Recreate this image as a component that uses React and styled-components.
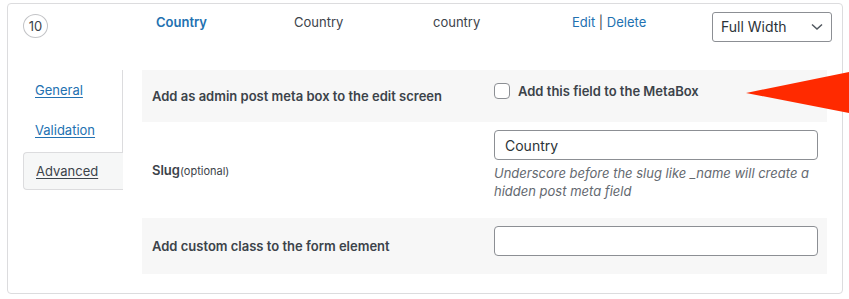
import styled, { createGlobalStyle } from "styled-components";

const GlobalStyle = createGlobalStyle`
  html, body {
    margin: 0;
    padding: 0;
    background: #fff;
  }
  body {
    font-family: Inter, "Noto Sans", "Liberation Sans", sans-serif;
    color: #3c434a;
  }
`;

const Page = styled.div`
  position: relative;
  width: 849px;
  height: 299px;
  overflow: hidden;
  padding: 3px 0 0 7px;
  box-sizing: border-box;
`;

const Box = styled.div`
  width: 836px;
  height: 291px;
  box-sizing: border-box;
  border: 1px solid #dcdcde;
  border-radius: 4px;
`;

const Header = styled.div`
  display: grid;
  grid-template-columns: 133px 138px 139px 139px 140px auto;
  height: 66px;
  box-sizing: border-box;
  padding: 8px 0 0 15px;
  font-size: 13px;
  line-height: 18px;
`;

const Order = styled.div`
  width: 25px;
  height: 24px;
  margin-top: 2px;
  box-sizing: border-box;
  border: 1px solid #c3c4c7;
  border-radius: 50%;
  display: flex;
  align-items: center;
  justify-content: center;
  font-size: 13px;
  color: #3c434a;
`;

const Cell = styled.div`
  color: ${(p) => (p.$link ? "#2271b1" : "#3c434a")};
  font-weight: ${(p) => (p.$bold ? 600 : 400)};
  padding-top: 1px;
`;

const Link = styled.a`
  color: #2271b1;
  text-decoration: none;
`;

const Select = styled.div`
  width: 120px;
  height: 30px;
  box-sizing: border-box;
  border: 1px solid #8c8f94;
  border-radius: 3px;
  display: flex;
  align-items: center;
  justify-content: space-between;
  padding: 0 8px 0 8px;
  font-size: 14px;
  color: #2c3338;
`;

const Body = styled.div`
  display: flex;
  padding: 0 15px 0 15px;
`;

const Tabs = styled.div`
  width: 100px;
  height: 120px;
  box-sizing: border-box;
  border-right: 1px solid #dcdcde;
  display: flex;
  flex-direction: column;
  flex-shrink: 0;
`;

const Tab = styled.a`
  height: ${(p) => (p.$active ? "38px" : "40px")};
  margin-top: ${(p) => (p.$active ? "2px" : "0")};
  box-sizing: border-box;
  display: flex;
  align-items: center;
  padding-left: 12px;
  font-size: 13px;
  color: ${(p) => (p.$active ? "#3c434a" : "#2271b1")};
  text-decoration: underline;
  text-underline-offset: 2px;
  ${(p) =>
    p.$active &&
    `
    border: 1px solid #dcdcde;
    border-right: none;
    border-radius: 4px 0 0 4px;
    background: #f6f7f7;
    margin-right: -1px;
  `}
`;

const Panel = styled.div`
  margin-left: 19px;
  flex: 1;
  display: flex;
  flex-direction: column;
`;

const Row = styled.div`
  display: grid;
  grid-template-columns: 352px 1fr;
  background: ${(p) => (p.$shaded ? "#f7f7f7" : "#fff")};
`;

const Label = styled.div`
  align-self: center;
  padding-left: 10px;
  font-size: 13px;
  font-weight: 600;
  color: #3c434a;
`;

const Small = styled.span`
  font-size: 11px;
  font-weight: 400;
`;

const Field = styled.div`
  padding: 8px 9px 18px 0;
`;

const CheckLine = styled.label`
  display: flex;
  align-items: center;
  gap: 8px;
  height: 26px;
  font-size: 13px;
  font-weight: 600;
  color: #3c434a;
`;

const Check = styled.span`
  width: 16px;
  height: 16px;
  box-sizing: border-box;
  border: 1px solid #8c8f94;
  border-radius: 4px;
  background: #fff;
`;

const Input = styled.div`
  height: 30px;
  box-sizing: border-box;
  border: 1px solid #8c8f94;
  border-radius: 4px;
  background: #fff;
  display: flex;
  align-items: center;
  padding: 0 10px;
  font-size: 14px;
  color: #2c3338;
`;

const Desc = styled.p`
  margin: 4px 0 0;
  max-width: 324px;
  font-size: 13px;
  line-height: 18px;
  font-style: italic;
  color: #646970;
`;

const Arrow = styled.svg`
  position: absolute;
  left: 746px;
  top: 60px;
`;

export default function App() {
  return (
    <Page>
      <GlobalStyle />
      <Box>
        <Header>
          <Order>10</Order>
          <Cell $link $bold>Country</Cell>
          <Cell>Country</Cell>
          <Cell>country</Cell>
          <Cell>
            <Link href="#">Edit</Link> | <Link href="#">Delete</Link>
          </Cell>
          <Select>
            Full Width
            <svg width="12" height="8" viewBox="0 0 12 8">
              <path d="M1 1.5 L6 6 L11 1.5" fill="none" stroke="#50575e" strokeWidth="1.5" />
            </svg>
          </Select>
        </Header>
        <Body>
          <Tabs>
            <Tab href="#">General</Tab>
            <Tab href="#">Validation</Tab>
            <Tab $active>Advanced</Tab>
          </Tabs>
          <Panel>
            <Row $shaded>
              <Label>Add as admin post meta box to the edit screen</Label>
              <Field>
                <CheckLine>
                  <Check />
                  Add this field to the MetaBox
                </CheckLine>
              </Field>
            </Row>
            <Row>
              <Label>
                Slug<Small>(optional)</Small>
              </Label>
              <Field>
                <Input>Country</Input>
                <Desc>Underscore before the slug like _name will create a hidden post meta field</Desc>
              </Field>
            </Row>
            <Row $shaded>
              <Label>Add custom class to the form element</Label>
              <Field>
                <Input />
              </Field>
            </Row>
          </Panel>
        </Body>
      </Box>
      <Arrow width="103" height="70" viewBox="0 0 103 70">
        <polygon points="0,33 103,12 103,53" fill="#ff2a00" />
      </Arrow>
    </Page>
  );
}
